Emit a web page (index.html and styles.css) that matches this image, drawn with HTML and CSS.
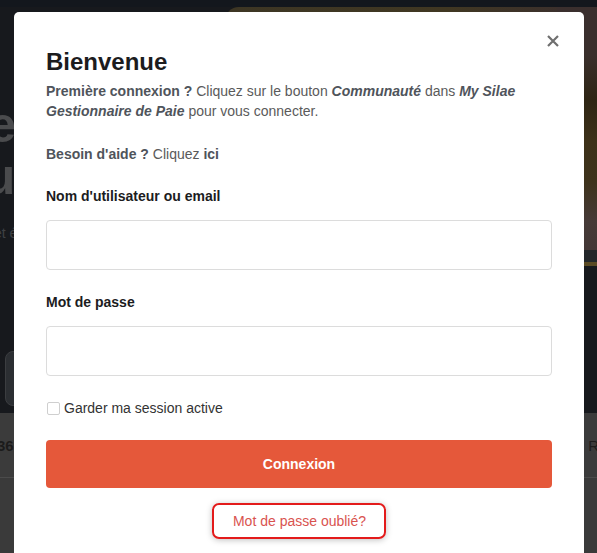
FILE: index.html
```html
<!DOCTYPE html>
<html lang="fr">
<head>
<meta charset="utf-8">
<title>Bienvenue</title>
<link rel="stylesheet" href="styles.css">
</head>
<body>
<div class="page">
  <div class="topbar"></div>
  <div class="hero">
    <div class="hero-left">
      <div class="big">Gérer</div>
      <div class="big second">Tu</div>
      <div class="small">et é</div>
      <div class="cta"></div>
    </div>
    <div class="hero-right">
      <div class="picture"></div>
      <div class="stripe"></div>
    </div>
  </div>
  <div class="band">
    <span class="band-left">365</span>
    <span class="band-right">R</span>
  </div>
  <div class="band-rest"></div>
</div>

<div class="modal">
  <button class="close" aria-label="Fermer">
    <svg width="12" height="12" viewBox="0 0 12 12"><path d="M1 1 L11 11 M11 1 L1 11" stroke="#6f6f6f" stroke-width="2.2" stroke-linecap="butt" fill="none"/></svg>
  </button>
  <h1 class="title">Bienvenue</h1>
  <p class="intro"><b>Première connexion ?</b> Cliquez sur le bouton <b><i>Communauté</i></b> dans <b><i>My Silae Gestionnaire de Paie</i></b> pour vous connecter.</p>
  <p class="help"><b>Besoin d'aide ?</b> Cliquez <b>ici</b></p>
  <label class="label">Nom d'utilisateur ou email</label>
  <div class="input"></div>
  <label class="label">Mot de passe</label>
  <div class="input"></div>
  <div class="remember"><span class="box"></span><span>Garder ma session active</span></div>
  <div class="submit">Connexion</div>
  <div class="forgot-row"><span class="forgot">Mot de passe oublié?</span></div>
</div>
</body>
</html>
```
FILE: styles.css
```css
* { box-sizing: border-box; }
html, body { margin: 0; padding: 0; }
body {
  width: 597px;
  height: 553px;
  overflow: hidden;
  background: #3a3a3a;
  font-family: "Liberation Sans", Arial, sans-serif;
  position: relative;
}
.page { display: flex; flex-direction: column; }
.topbar { height: 7px; background: #13171d; }
.hero {
  height: 406px;
  background: #17191d;
  display: flex;
}
.hero-left {
  width: 225px;
  overflow: hidden;
  display: flex;
  flex-direction: column;
  color: #4a4b4d;
}
.big {
  font-size: 50px;
  font-weight: bold;
  line-height: 52px;
  white-space: nowrap;
  margin-left: -98px;
}
.big:first-child { margin-top: 92px; }
.second { margin-left: -42px; }
.small { font-size: 14px; color: #3f4144; margin-top: 22px; margin-left: -6px; }
.cta {
  margin-top: 110px;
  margin-left: 5px;
  width: 150px;
  height: 55px;
  border-radius: 8px;
  background: #2b2e32;
  border: 1px solid #3b3d40;
}
.hero-right { flex: 1; display: flex; flex-direction: column; }
.picture {
  height: 243px;
  border-top-left-radius: 14px;
  background: linear-gradient(90deg, #3d3624 0%, #403722 60%, #3b302c 90%, #3a2f2e 100%);
  position: relative;
}
.picture::after {
  content: "";
  position: absolute;
  right: 0; top: 0; bottom: 0; width: 40px;
  background: linear-gradient(180deg, #3a2f2e 0%, #3a2f2c 20%, #2e2514 38%, #3d3119 55%, #3e331c 72%, #463a37 88%, #433736 100%);
}
.stripe {
  height: 16px;
  background: linear-gradient(180deg, #23272a 0%, #23272a 75%, #5a4a24 75%, #5a4a24 100%);
}
.band {
  height: 65px;
  background: #3b3b3b;
  border-bottom: 1px solid #4b4b4b;
  display: flex;
  justify-content: space-between;
  align-items: center;
  font-size: 15px;
  color: #1b1b1b;
  overflow: hidden;
}
.band-left { font-weight: bold; margin-left: -3px; }
.band-right { margin-right: -2px; }
.band-rest { height: 80px; background: #3a3a3a; }

.modal {
  position: absolute;
  top: 12px;
  left: 14px;
  width: 570px;
  height: 560px;
  background: #fff;
  border-radius: 5px;
  padding: 35px 32px 0 32px;
  display: flex;
  flex-direction: column;
}
.close {
  position: absolute;
  top: 23px;
  right: 25px;
  width: 12px;
  height: 12px;
  padding: 0;
  border: 0;
  background: none;
  display: flex;
}
.title {
  margin: 0;
  font-size: 24px;
  line-height: 30px;
  font-weight: bold;
  color: #1c1c1e;
}
.intro, .help {
  margin: 4px 0 0 0;
  font-size: 14px;
  line-height: 20px;
  color: #5a5a5a;
}
.intro b, .help b { color: #4f545b; }
.help { margin-top: 23px; }
.label {
  display: block;
  margin-top: 22px;
  font-size: 14px;
  line-height: 20px;
  font-weight: bold;
  color: #1c1c1e;
}
.input {
  margin-top: 14px;
  height: 50px;
  border: 1px solid #dcdcdc;
  border-radius: 4px;
}
.remember {
  margin-top: 22px;
  display: flex;
  align-items: center;
  gap: 4px;
  font-size: 14px;
  line-height: 20px;
  color: #333;
}
.box {
  width: 13px;
  height: 13px;
  margin-left: 1px;
  border: 1px solid #cfcfcf;
  border-radius: 2px;
}
.submit {
  margin-top: 22px;
  height: 48px;
  border-radius: 4px;
  background: #e5583a;
  color: #fff;
  font-weight: bold;
  font-size: 14px;
  display: flex;
  align-items: center;
  justify-content: center;
}
.forgot-row {
  margin-top: 15px;
  display: flex;
  justify-content: center;
}
.forgot {
  display: block;
  height: 36px;
  padding: 6px 18px 0 19px;
  border: 2px solid #e31b1b;
  border-radius: 7px;
  box-shadow: 0 1px 6px rgba(0,0,0,0.25);
  font-size: 14px;
  line-height: 20px;
  color: #d9534f;
}
```
